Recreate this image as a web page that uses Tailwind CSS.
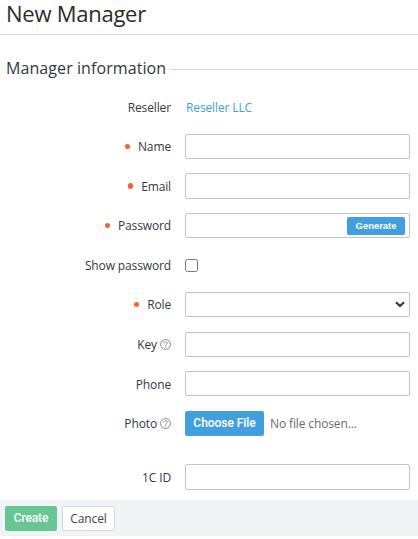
<!DOCTYPE html>
<html lang="en">
<head>
  <meta charset="UTF-8" />
  <meta name="viewport" content="width=device-width, initial-scale=1" />
  <title>New Manager</title>
  <script src="https://cdn.jsdelivr.net/npm/@tailwindcss/browser@4"></script>
</head>
<body class="bg-white font-['Open_Sans',sans-serif] text-[12px] leading-[25px] tracking-[-0.13px] text-[#2f3943]">

  <!-- Title -->
  <header class="h-[35px] border-b border-[#d5dae2] pl-[6px]">
    <h1 class="text-[22px] leading-[26px] tracking-[-0.25px] text-[#2b2b2b]">New Manager</h1>
  </header>

  <main>
    <form>
      <div class="flex h-[60px] pt-[21px] pl-[6px]">
        <h2 class="text-[16px] leading-[24px] tracking-[0.08px] whitespace-nowrap">Manager information</h2>
        <span class="flex-1 h-px ml-1 mt-[13px] bg-[#d5dae2]"></span>
      </div>

      <!-- Reseller -->
      <div class="flex h-[39px] pr-2">
        <span class="w-[171px] mr-[15px] text-right">Reseller</span>
        <a href="#" class="text-[#429fde]">Reseller LLC</a>
      </div>

      <!-- Name -->
      <div class="flex h-[39px] pr-2">
        <label for="name" class="flex justify-end w-[171px] mr-[14px]"><span class="size-[5px] mt-[10px] mr-2 rounded-full bg-[#f7602f]"></span>Name</label>
        <input id="name" type="text" class="flex-1 h-[25px] border border-[#bfc4cd] rounded-[2px]" />
      </div>

      <!-- Email -->
      <div class="flex h-10 pr-2">
        <label for="email" class="flex justify-end w-[171px] mr-[14px] pt-px"><span class="w-[5px] h-[6px] mt-[9px] mr-2 rounded-full bg-[#f7602f]"></span>Email</label>
        <input id="email" type="text" class="flex-1 h-[26px] border border-[#bfc4cd] rounded-[2px]" />
      </div>

      <!-- Password -->
      <div class="flex h-10 pr-2">
        <label for="password" class="flex justify-end w-[171px] mr-[14px]"><span class="size-[5px] mt-[10px] mr-2 rounded-full bg-[#f7602f]"></span>Password</label>
        <div class="flex flex-1 items-center h-[25px] pr-1 border border-[#bfc4cd] rounded-[2px]">
          <input id="password" type="password" class="flex-1 min-w-0 h-full" />
          <button type="button" class="w-[58px] h-[18px] rounded-[2px] bg-[#429fde] font-['Liberation_Sans',sans-serif] text-[9.5px] leading-[18px] tracking-[-0.05px] font-bold text-white">Generate</button>
        </div>
      </div>

      <!-- Show password -->
      <div class="flex h-[39px] pr-2">
        <label for="show" class="w-[171px] mr-[14px] text-right">Show password</label>
        <input id="show" type="checkbox" class="size-[13px] mt-[6px]" />
      </div>

      <!-- Role -->
      <div class="flex h-10 pr-2">
        <label for="role" class="flex justify-end w-[171px] mr-[14px]"><span class="size-[5px] mt-[10px] mr-2 rounded-full bg-[#f7602f]"></span>Role</label>
        <div class="flex flex-1 h-[25px] border border-[#bfc4cd] rounded-[2px]">
          <select id="role" class="flex-1 appearance-none"></select>
          <svg class="w-[10px] h-[7px] mt-[8px] mr-1" viewBox="0 0 10 7" fill="none" stroke="#2f3943" stroke-width="2.2"><path d="M1 1.2 5 5l4-3.8" /></svg>
        </div>
      </div>

      <!-- Key -->
      <div class="flex h-[39px] pr-2">
        <label for="key" class="flex justify-end w-[171px] mr-[14px]">Key
          <svg class="size-[11px] mt-[7px] ml-[3px]" viewBox="0 0 11 11" fill="none" stroke="#858b93"><circle cx="5.5" cy="5.5" r="4.9" /><path d="M3.9 4.4c0-2.2 3.3-2.1 3.3-.1 0 1.2-1.7 1.2-1.7 2.5M5.5 7.6v1" /></svg>
        </label>
        <input id="key" type="text" class="flex-1 h-[25px] border border-[#bfc4cd] rounded-[2px]" />
      </div>

      <!-- Phone -->
      <div class="flex h-10 pr-2">
        <label for="phone" class="w-[171px] mr-[14px] pt-px text-right">Phone</label>
        <input id="phone" type="text" class="flex-1 h-[25px] border border-[#bfc4cd] rounded-[2px]" />
      </div>

      <!-- Photo -->
      <div class="flex h-[53px] pr-2">
        <span class="flex justify-end w-[171px] mr-[14px]">Photo
          <svg class="size-[11px] mt-[7px] ml-[3px]" viewBox="0 0 11 11" fill="none" stroke="#858b93"><circle cx="5.5" cy="5.5" r="4.9" /><path d="M3.9 4.4c0-2.2 3.3-2.1 3.3-.1 0 1.2-1.7 1.2-1.7 2.5M5.5 7.6v1" /></svg>
        </span>
        <button type="button" class="w-[79px] h-[25px] rounded-[2px] bg-[#429fde] font-[Roboto,sans-serif] tracking-[-0.05px] font-medium text-white">Choose File</button>
        <span class="ml-[6px] text-[#6b6b6b]">No file chosen...</span>
      </div>

      <!-- 1C ID -->
      <div class="flex h-9 pr-2">
        <label for="cid" class="w-[171px] mr-[14px] pt-px text-right">1C ID</label>
        <input id="cid" type="text" class="flex-1 h-[26px] border border-[#bfc4cd] rounded-[2px]" />
      </div>

      <!-- Buttons -->
      <div class="flex gap-[5px] h-9 pt-[6px] pl-[5px] bg-[#f0f4f7]">
        <button type="submit" class="w-[52px] h-[25px] rounded-[2px] bg-[#67c691] font-[Roboto,sans-serif] font-medium text-white">Create</button>
        <button type="button" class="w-[53px] h-[25px] border border-[#d3dadf] rounded-[2px] bg-white leading-[23px] text-[#444]">Cancel</button>
      </div>
    </form>
  </main>
</body>
</html>
